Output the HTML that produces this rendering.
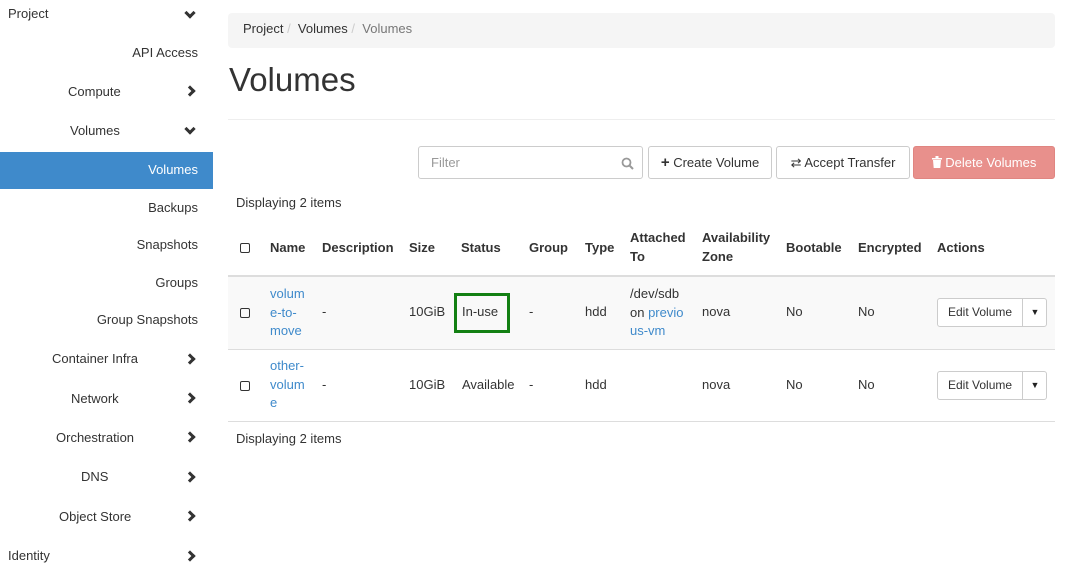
<!DOCTYPE html>
<html><head><style>
*{box-sizing:border-box;margin:0;padding:0}
body{width:1068px;height:575px;overflow:hidden;background:#fff;font-family:"Liberation Sans",sans-serif;font-size:13px;color:#333;position:relative}
.a{position:absolute;white-space:nowrap}
.chev{position:absolute;left:186px;width:8px;height:8px;border-right:3px solid #333;border-bottom:3px solid #333}
.r{transform:rotate(-45deg)}
.d{transform:rotate(45deg)}
.btn{position:absolute;border:1px solid #ccc;border-radius:3px;background:#fff;height:33px;line-height:31px;text-align:center;font-size:13px}
.h{position:absolute;font-weight:bold;line-height:19px}
.cb{position:absolute;width:10px;height:10px;border:1px solid #333;border-radius:2px}
.lk{color:#3f8acb}
</style></head><body>
<div class="a" style="left:8px;top:6px">Project</div><div class="chev d" style="top:9px"></div>
<div class="a" style="right:870px;top:45px">API Access</div>
<div class="a" style="left:68px;top:84px">Compute</div><div class="chev r" style="top:87px"></div>
<div class="a" style="left:70px;top:123px">Volumes</div><div class="chev d" style="top:125px"></div>
<div class="a" style="left:0;top:152px;width:213px;height:37px;background:#3f8acb"></div>
<div class="a" style="right:870px;top:162px;color:#fff">Volumes</div>
<div class="a" style="right:870px;top:200px">Backups</div>
<div class="a" style="right:870px;top:237px">Snapshots</div>
<div class="a" style="right:870px;top:275px">Groups</div>
<div class="a" style="right:870px;top:312px">Group Snapshots</div>
<div class="a" style="left:52px;top:351px">Container Infra</div><div class="chev r" style="top:355px"></div>
<div class="a" style="left:71px;top:391px">Network</div><div class="chev r" style="top:394px"></div>
<div class="a" style="left:56px;top:430px">Orchestration</div><div class="chev r" style="top:433px"></div>
<div class="a" style="left:81px;top:469px">DNS</div><div class="chev r" style="top:473px"></div>
<div class="a" style="left:59px;top:509px">Object Store</div><div class="chev r" style="top:512px"></div>
<div class="a" style="left:8px;top:548px">Identity</div><div class="chev r" style="top:552px"></div>
<div class="a" style="left:228px;top:13px;width:827px;height:35px;background:#f5f5f5;border-radius:4px"></div>
<div class="a" style="left:243px;top:21px">Project <span style="color:#ccc">/</span>&nbsp; Volumes <span style="color:#ccc">/</span>&nbsp; <span style="color:#777">Volumes</span></div>
<div class="a" style="left:229px;top:60px;font-size:33px;line-height:40px">Volumes</div>
<div class="a" style="left:228px;top:119px;width:827px;height:1px;background:#eee"></div>
<div class="a" style="left:418px;top:146px;width:225px;height:33px;border:1px solid #ccc;border-radius:3px"></div>
<div class="a" style="left:431px;top:155px;color:#999">Filter</div>
<svg class="a" style="left:621px;top:157px" width="13" height="13" viewBox="0 0 13 13"><circle cx="5.5" cy="5.5" r="4" fill="none" stroke="#999" stroke-width="1.8"/><path d="M8.5 8.5L12 12" stroke="#999" stroke-width="2"/></svg>
<div class="btn" style="left:648px;top:146px;width:124px"><b style="font-size:15px">+</b> Create Volume</div>
<div class="btn" style="left:776px;top:146px;width:134px">⇄ Accept Transfer</div>
<div class="btn" style="left:913px;top:146px;width:142px;background:#e8908c;border-color:#e08581;color:#fff"><svg width="10" height="12" viewBox="0 0 10 12" style="vertical-align:-1px"><path d="M0 2h10v1.5H0zM3.5 0h3v2h-3zM1 4h8l-.7 8H1.7z" fill="#fff"/></svg> Delete Volumes</div>
<div class="a" style="left:236px;top:195px">Displaying 2 items</div>
<div class="cb" style="left:240px;top:243px"></div>
<div class="h" style="left:270px;top:238px">Name</div>
<div class="h" style="left:322px;top:238px">Description</div>
<div class="h" style="left:409px;top:238px">Size</div>
<div class="h" style="left:461px;top:238px">Status</div>
<div class="h" style="left:529px;top:238px">Group</div>
<div class="h" style="left:585px;top:238px">Type</div>
<div class="h" style="left:630px;top:228px">Attached<br>To</div>
<div class="h" style="left:702px;top:228px">Availability<br>Zone</div>
<div class="h" style="left:786px;top:238px">Bootable</div>
<div class="h" style="left:858px;top:238px">Encrypted</div>
<div class="h" style="left:937px;top:238px">Actions</div>
<div class="a" style="left:228px;top:275px;width:827px;height:2px;background:#ddd"></div>
<div class="a" style="left:228px;top:277px;width:827px;height:72px;background:#f9f9f9"></div>
<div class="a" style="left:228px;top:349px;width:827px;height:1px;background:#ddd"></div>
<div class="cb" style="left:240px;top:308px"></div>
<div class="a lk" style="left:270px;top:285px;line-height:18.5px">volum<br>e-to-<br>move</div>
<div class="a" style="left:322px;top:304px">-</div>
<div class="a" style="left:409px;top:304px">10GiB</div>
<div class="a" style="left:454px;top:293px;width:56px;height:40px;border:3px solid #138013"></div>
<div class="a" style="left:462px;top:304px">In-use</div>
<div class="a" style="left:529px;top:304px">-</div>
<div class="a" style="left:585px;top:304px">hdd</div>
<div class="a" style="left:630px;top:285px;line-height:18.5px">/dev/sdb<br>on <span class="lk">previo</span><br><span class="lk">us-vm</span></div>
<div class="a" style="left:702px;top:304px">nova</div>
<div class="a" style="left:786px;top:304px">No</div>
<div class="a" style="left:858px;top:304px">No</div>
<div class="btn" style="left:937px;top:298px;width:110px;height:29px;line-height:27px;font-size:12px;text-align:left;padding-left:10px">Edit Volume<span style="position:absolute;left:84px;top:0;height:27px;border-left:1px solid #ccc;width:25px;text-align:center;font-size:9px;color:#222">▼</span></div>
<div class="a" style="left:228px;top:421px;width:827px;height:1px;background:#ddd"></div>
<div class="cb" style="left:240px;top:381px"></div>
<div class="a lk" style="left:270px;top:357px;line-height:18.5px">other-<br>volum<br>e</div>
<div class="a" style="left:322px;top:377px">-</div>
<div class="a" style="left:409px;top:377px">10GiB</div>
<div class="a" style="left:462px;top:377px">Available</div>
<div class="a" style="left:529px;top:377px">-</div>
<div class="a" style="left:585px;top:377px">hdd</div>
<div class="a" style="left:702px;top:377px">nova</div>
<div class="a" style="left:786px;top:377px">No</div>
<div class="a" style="left:858px;top:377px">No</div>
<div class="btn" style="left:937px;top:371px;width:110px;height:29px;line-height:27px;font-size:12px;text-align:left;padding-left:10px">Edit Volume<span style="position:absolute;left:84px;top:0;height:27px;border-left:1px solid #ccc;width:25px;text-align:center;font-size:9px;color:#222">▼</span></div>
<div class="a" style="left:236px;top:431px">Displaying 2 items</div>
</body></html>
